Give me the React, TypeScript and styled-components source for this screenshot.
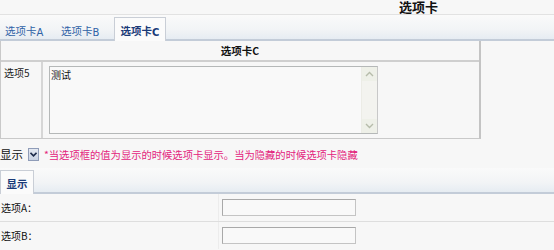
import React from "react";
import styled, { createGlobalStyle } from "styled-components";

const Global = createGlobalStyle`
  html, body { margin: 0; padding: 0; }
  body {
    background: #f7f7f7;
    font-family: "Noto Sans CJK SC", "DejaVu Sans", sans-serif;
    font-size: 10px;
    color: #222;
    width: 554px;
    overflow: hidden;
  }
`;

const Page = styled.div`
  display: flex;
  flex-direction: column;
  width: 554px;
`;

const Header = styled.div`
  height: 14px;
  border-bottom: 1px solid #e2e2e2;
  display: flex;
  padding-left: 399px;
`;

const Title = styled.h1`
  margin: 0;
  font-size: 13px;
  font-weight: bold;
  line-height: 14px;
  color: #111;
`;

const TabBar = styled.div<{ $top?: number }>`
  height: 24px;
  margin-top: ${(p) => p.$top ?? 0}px;
  display: flex;
  align-items: flex-end;
  background: linear-gradient(#fafafa, #f2f4f6 60%, #e6ecf2);
  border-bottom: 2px solid #c3ccd8;
`;

const Tab = styled.div<{ $active?: boolean; $w: number; $pl?: number }>`
  width: ${(p) => p.$w}px;
  height: 24px;
  box-sizing: border-box;
  display: flex;
  align-items: center;
  justify-content: ${(p) => (p.$pl !== undefined ? "flex-start" : "center")};
  padding-left: ${(p) => p.$pl ?? 0}px;
  padding-top: 2px;
  white-space: nowrap;
  color: ${(p) => (p.$active ? "#1a3a78" : "#2f62a6")};
  font-weight: ${(p) => (p.$active ? "bold" : "normal")};
  background: ${(p) => (p.$active ? "#fbfbfb" : "transparent")};
  border: 1px solid ${(p) => (p.$active ? "#c9ced6" : "transparent")};
  border-bottom: none;
  margin-bottom: -2px;
  font-size: 10.5px;
`;

const Sub = styled.span`
  font-size: 10px;
  position: relative;
  top: 2px;
  font-family: "DejaVu Sans", sans-serif;
`;

const Table = styled.div`
  width: 478px;
  border: 1px solid #c9c9c9;
  border-right: 2px solid #c4c4c4;
  border-top: none;
  display: flex;
  flex-direction: column;
`;

const HeadRow = styled.div`
  height: 19px;
  border-bottom: 2px solid #cfcfcf;
  display: flex;
  align-items: center;
  justify-content: center;
  font-weight: bold;
  font-size: 10.5px;
  color: #111;
`;

const Row = styled.div`
  display: flex;
  height: 76px;
`;

const LabelCell = styled.div`
  border-right: 2px solid #d6d6d6;
  padding: 3px 0 0 3px;
  box-sizing: border-box;
  width: 42px;
  color: #222;
`;

const FieldCell = styled.div`
  flex: 1;
  padding: 4px 0 0 6px;
`;

const TextBox = styled.div`
  width: 329px;
  height: 68px;
  box-sizing: border-box;
  border: 1px solid #b5b8b8;
  border-right-color: #c8c8c8;
  background: #f9f9f9;
  display: flex;
`;

const TextArea = styled.textarea`
  flex: 1;
  border: none;
  background: transparent;
  resize: none;
  overflow: hidden;
  font: inherit;
  font-size: 10px;
  color: #111;
  padding: 0 1px;
  margin: 0;
  outline: none;
`;

const ScrollTrack = styled.div`
  width: 15px;
  display: flex;
  flex-direction: column;
  justify-content: space-between;
  background: #f3f3ef;
  border-left: 1px solid #ecece6;
`;

const ScrollBtn = styled.div`
  height: 14px;
  display: flex;
  align-items: center;
  justify-content: center;
  background: #eef0e8;
`;

const OptionRow = styled.div`
  display: flex;
  align-items: center;
  height: 16px;
  margin-top: 7px;
  gap: 5px;
`;

const SelectBox = styled.div`
  display: flex;
  align-items: center;
  height: 13px;
  width: 39px;
`;

const SelectText = styled.span`
  width: 28px;
  font-size: 11.5px;
  color: #111;
`;

const SelectBtn = styled.div`
  width: 11px;
  height: 13px;
  box-sizing: border-box;
  border: 1px solid #8f9cb8;
  background: linear-gradient(#e4e9f2, #c9d2e2);
  display: flex;
  align-items: center;
  justify-content: center;
`;

const Note = styled.span`
  color: #e3237c;
  font-size: 10.3px;
`;

const FormTable = styled.div`
  display: flex;
  flex-direction: column;
`;

const FormRow = styled.div<{ $last?: boolean }>`
  height: 27px;
  display: flex;
  align-items: center;
  border-bottom: ${(p) => (p.$last ? "none" : "1px solid #dedede")};
`;

const FormLabel = styled.div`
  width: 219px;
  height: 100%;
  display: flex;
  align-items: center;
  padding-left: 1px;
  box-sizing: border-box;
  border-right: 1px solid #ececec;
  color: #111;
`;

const Input = styled.input`
  margin-left: 3px;
  width: 134px;
  height: 17px;
  box-sizing: border-box;
  border: 1px solid #a9a9a9;
  border-right-color: #c4c4c4;
  border-bottom-color: #c4c4c4;
  background: #f9f9f9;
  padding: 0;
`;

const Chevron = ({ up }: { up?: boolean }) => (
  <svg width="9" height="6" viewBox="0 0 9 6">
    <path
      d={up ? "M1 5 L4.5 1.5 L8 5" : "M1 1 L4.5 4.5 L8 1"}
      fill="none"
      stroke="#b6bcaa"
      strokeWidth="1.4"
    />
  </svg>
);

export default function App() {
  return (
    <Page>
      <Global />
      <Header>
        <Title>选项卡</Title>
      </Header>
      <TabBar>
        <Tab $w={57} $pl={4}>选项卡<Sub>A</Sub></Tab>
        <Tab $w={57} $pl={3}>选项卡<Sub>B</Sub></Tab>
        <Tab $w={52} $active>选项卡<Sub>C</Sub></Tab>
      </TabBar>
      <Table>
        <HeadRow>选项卡C</HeadRow>
        <Row>
          <LabelCell>选项5</LabelCell>
          <FieldCell>
            <TextBox>
              <TextArea defaultValue="测试" />
              <ScrollTrack>
                <ScrollBtn>
                  <Chevron up />
                </ScrollBtn>
                <ScrollBtn>
                  <Chevron />
                </ScrollBtn>
              </ScrollTrack>
            </TextBox>
          </FieldCell>
        </Row>
      </Table>
      <OptionRow>
        <SelectBox>
          <SelectText>显示</SelectText>
          <SelectBtn>
            <svg width="7" height="5" viewBox="0 0 7 5">
              <path d="M0.5 0.8 L3.5 3.8 L6.5 0.8" fill="none" stroke="#1d2b4a" strokeWidth="1.6" />
            </svg>
          </SelectBtn>
        </SelectBox>
        <Note>*当选项框的值为显示的时候选项卡显示。当为隐藏的时候选项卡隐藏</Note>
      </OptionRow>
      <TabBar $top={6}>
        <Tab $w={34} $active>显示</Tab>
      </TabBar>
      <FormTable>
        <FormRow>
          <FormLabel>选项A：</FormLabel>
          <Input />
        </FormRow>
        <FormRow $last>
          <FormLabel>选项B：</FormLabel>
          <Input />
        </FormRow>
      </FormTable>
    </Page>
  );
}
